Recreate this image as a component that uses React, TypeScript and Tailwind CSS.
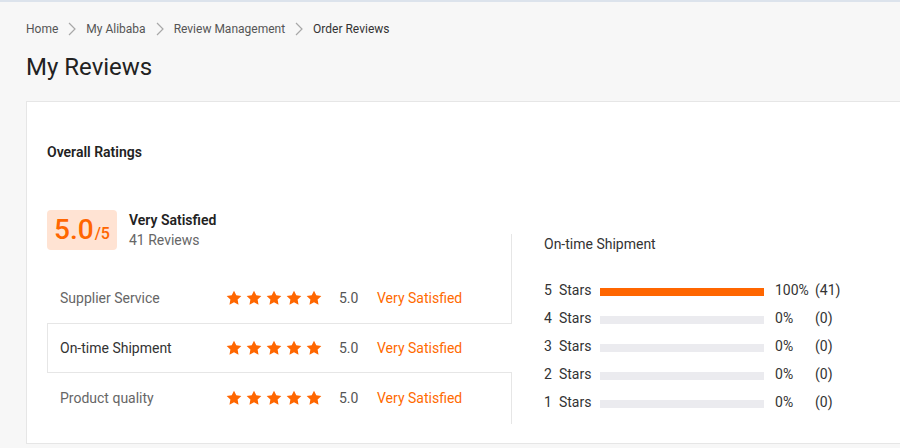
const font = { fontFamily: "Roboto, 'Liberation Sans', sans-serif" };

const crumbs = ["Home", "My Alibaba", "Review Management", "Order Reviews"];

const ratings = [
  { label: "Supplier Service", score: "5.0", active: false },
  { label: "On-time Shipment", score: "5.0", active: true },
  { label: "Product quality", score: "5.0", active: false },
];

const distribution = [
  { stars: 5, pct: 100, count: 41 },
  { stars: 4, pct: 0, count: 0 },
  { stars: 3, pct: 0, count: 0 },
  { stars: 2, pct: 0, count: 0 },
  { stars: 1, pct: 0, count: 0 },
];

const Chevron = () => (
  <svg
    viewBox="0 0 8 14"
    className="w-[8px] h-[14px] mx-[10px]"
    fill="none"
    stroke="#a8a8a8"
    strokeWidth={1.2}
  >
    <path d="M1 1l6 6-6 6" />
  </svg>
);

const Star = () => (
  <svg viewBox="0 0 24 24" className="w-[16px] h-[16px]" fill="#ff6600">
    <path d="M12 1l3.4 7 7.6 1-5.6 5.3 1.4 7.7L12 18.3 5.2 22l1.4-7.7L1 9l7.6-1z" />
  </svg>
);

const Stars = () => (
  <div className="flex items-center gap-[4px]">
    {[0, 1, 2, 3, 4].map((i) => (
      <Star key={i} />
    ))}
  </div>
);

const App = () => {
  return (
    <div
      style={font}
      className="w-[900px] h-[448px] overflow-hidden bg-[#f7f7f7] border-t-2 border-[#dce3ec] pl-[26px]"
    >
      <nav className="flex items-center h-[20px] mt-[17px] text-[12px] text-[#555]">
        {crumbs.map((c, i) => (
          <div key={c} className="flex items-center">
            {i > 0 && <Chevron />}
            <span className={i === crumbs.length - 1 ? "text-[#333]" : ""}>
              {c}
            </span>
          </div>
        ))}
      </nav>
      <h1 className="text-[24px] leading-[30px] mt-[13px] text-[#222]">
        My Reviews
      </h1>
      <div className="mt-[19px] w-[900px] h-[343px] bg-white border border-[#e6e6e6] pt-[40px] pl-[20px]">
        <h3 className="text-[14px] leading-[20px] font-semibold text-[#222]">
          Overall Ratings
        </h3>
        <div className="flex items-start mt-[48px]">
          <div className="w-[464px]">
            <div className="flex items-center h-[40px]">
              <div className="w-[70px] h-[40px] rounded-[4px] bg-[#ffe3d3] flex items-baseline justify-center text-[#ff6600] font-medium">
                <span className="text-[28px] leading-[40px]">5.0</span>
                <span className="text-[16px] ml-px">/5</span>
              </div>
              <div className="ml-[12px] text-[14px] leading-[20px]">
                <div className="font-semibold text-[#222]">Very Satisfied</div>
                <div className="text-[#666]">41 Reviews</div>
              </div>
            </div>
            <div className="mt-[23px]">
              {ratings.map((r) => (
                <div
                  key={r.label}
                  className={
                    r.active
                      ? "relative z-10 -mr-px flex items-center h-[50px] bg-white border border-r-0 border-[#e6e6e6] pl-[12px] text-[14px]"
                      : "flex items-center h-[50px] pl-[13px] text-[14px]"
                  }
                >
                  <span
                    className={
                      "w-[166px] " + (r.active ? "text-[#333]" : "text-[#666]")
                    }
                  >
                    {r.label}
                  </span>
                  <Stars />
                  <span className="ml-[17px] w-[38px] text-[#555]">
                    {r.score}
                  </span>
                  <span className="text-[#ff6a00]">Very Satisfied</span>
                </div>
              ))}
            </div>
          </div>
          <div className="flex-1 mt-[24px] h-[190px] border-l border-[#e6e6e6] pl-[32px] text-[14px]">
            <div className="leading-[20px] text-[#333]">On-time Shipment</div>
            <div className="mt-[26px] flex flex-col gap-[8px]">
              {distribution.map((d) => (
                <div
                  key={d.stars}
                  className="flex items-start h-[20px] leading-[20px] text-[#333]"
                >
                  <span className="w-[56px]">
                    {d.stars}
                    <span className="ml-[7px]">Stars</span>
                  </span>
                  <div className="w-[164px] h-[8px] mt-[8px] bg-[#ebebef]">
                    <div
                      className="h-full bg-[#ff6600]"
                      style={{ width: `${d.pct}%` }}
                    />
                  </div>
                  <span className="ml-[11px] w-[40px]">{d.pct}%</span>
                  <span>({d.count})</span>
                </div>
              ))}
            </div>
          </div>
        </div>
      </div>
    </div>
  );
};

export default App;
